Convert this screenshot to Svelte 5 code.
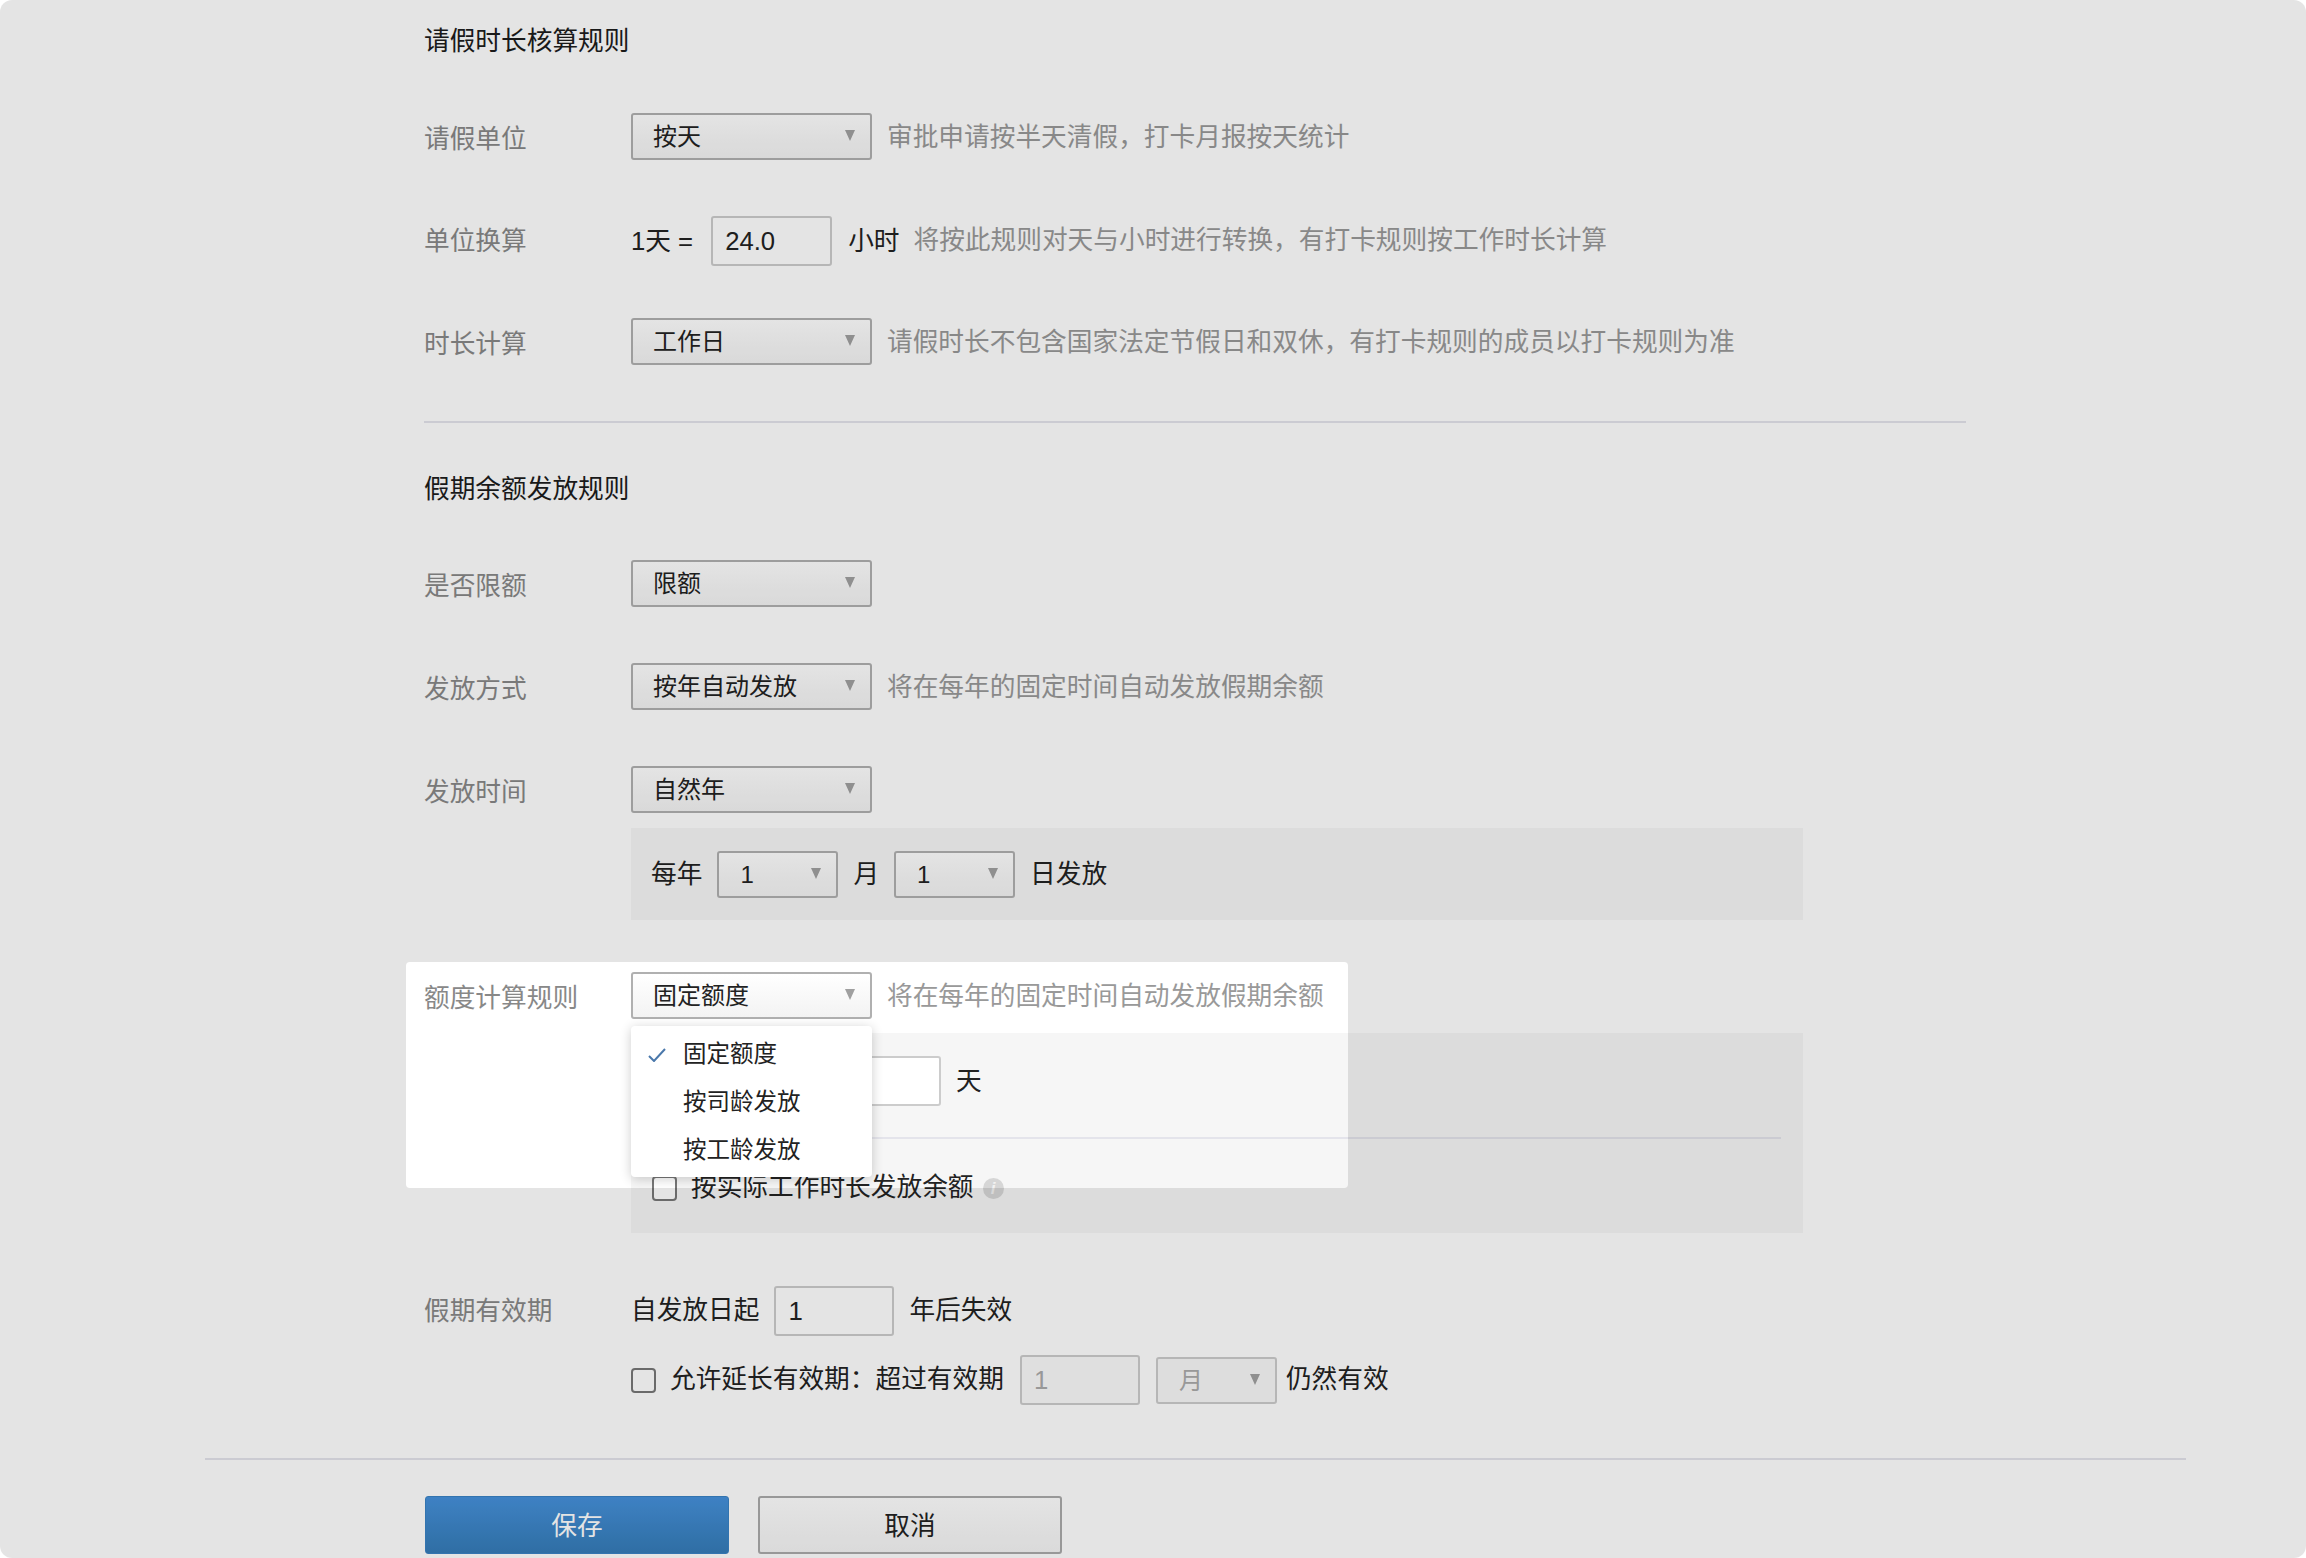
<script>
	let options = ["固定额度", "按司龄发放", "按工龄发放"];
	let selected = "固定额度";
</script>

{#snippet select(text, cls = "")}
	<div class="select {cls}">
		<span>{text}</span>
		<i class="arrow"></i>
	</div>
{/snippet}

<div class="page">
	<div class="form">
		<h3>请假时长核算规则</h3>

		<div class="row r1">
			<div class="label low">请假单位</div>
			{@render select("按天")}
			<div class="hint">审批申请按半天清假，打卡月报按天统计</div>
		</div>
		<div class="row r2">
			<div class="label">单位换算</div>
			<span class="text">1天 =</span>
			<input class="field eq" value="24.0" readonly />
			<span class="text after">小时</span>
			<div class="hint wide">将按此规则对天与小时进行转换，有打卡规则按工作时长计算</div>
		</div>
		<div class="row r3">
			<div class="label low">时长计算</div>
			{@render select("工作日")}
			<div class="hint">请假时长不包含国家法定节假日和双休，有打卡规则的成员以打卡规则为准</div>
		</div>

		<div class="line"></div>

		<h3 class="second">假期余额发放规则</h3>

		<div class="row r4">
			<div class="label low">是否限额</div>
			{@render select("限额")}
		</div>
		<div class="row r5">
			<div class="label low">发放方式</div>
			{@render select("按年自动发放")}
			<div class="hint">将在每年的固定时间自动发放假期余额</div>
		</div>
		<div class="row r5">
			<div class="label low">发放时间</div>
			{@render select("自然年")}
		</div>
		<div class="box date">
			<span class="text">每年</span>
			{@render select("1", "small")}
			<span class="text">月</span>
			{@render select("1", "small")}
			<span class="text">日发放</span>
		</div>

		<div class="row r6">
			<div class="spot"></div>
			<div class="label low">额度计算规则</div>
			<div class="drop">
				{@render select("固定额度")}
				<ul class="menu">
					{#each options as o}
						<li>
							{#if o === selected}
								<svg class="tick" width="18" height="14" viewBox="0 0 18 14"><path d="M1 8 L6 13 L17 1" fill="none" stroke="#4a78ab" stroke-width="2" /></svg>
							{/if}
							{o}
						</li>
					{/each}
				</ul>
			</div>
			<div class="hint">将在每年的固定时间自动发放假期余额</div>
		</div>
		<div class="box quota">
			<div class="quota-top">
				<input class="field" readonly />
				<span class="text">天</span>
			</div>
			<div class="inner-line"></div>
			<div class="check-row">
				<span class="check"></span>
				<span class="text">按实际工作时长发放余额</span>
				<span class="info">i</span>
			</div>
		</div>

		<div class="row r7">
			<div class="label">假期有效期</div>
			<span class="text">自发放日起</span>
			<input class="field" value="1" readonly />
			<span class="text">年后失效</span>
		</div>
		<div class="row r8">
			<span class="check"></span>
			<span class="text">允许延长有效期：超过有效期</span>
			<input class="field off" value="1" disabled />
			{@render select("月", "small off")}
			<span class="text tight">仍然有效</span>
		</div>
	</div>

	<div class="footer">
		<button class="btn primary">保存</button>
		<button class="btn">取消</button>
	</div>
</div>

<style>
	:global(body) {
		background: #fff;
	}
	.page {
		position: relative;
		width: 2306px;
		height: 1558px;
		overflow: hidden;
		border-radius: 12px;
		background: #fff;
		font-family: "Liberation Sans", "Noto Sans CJK SC", sans-serif;
		font-size: 25.7px;
		color: #222;
	}
	.form {
		padding: 24px 340px 0 424px;
	}
	h3 {
		margin: 0;
		font-size: 25.7px;
		font-weight: 400;
		line-height: 34px;
		color: #1c1c1c;
	}
	h3.second {
		margin-top: 49px;
	}
	.row {
		position: relative;
		display: flex;
		align-items: center;
		white-space: nowrap;
	}
	.r1 { margin-top: 55px; }
	.r2 { margin-top: 56px; }
	.r3 { margin-top: 52px; }
	.r4 { margin-top: 54px; }
	.r5 { margin-top: 56px; }
	.r6 { margin-top: 52px; }
	.r7 { margin-top: 53px; gap: 15px; }
	.r8 { margin-top: 19px; margin-left: 207px; }

	.r7 .text,
	.r8 .text {
		padding-bottom: 2px;
	}
	.label {
		width: 207px;
		flex: none;
		color: #888;
		line-height: 34px;
	}
	.r7 .label {
		margin-right: -15px;
	}
	.low {
		padding-top: 4px;
	}
	.text {
		line-height: 34px;
		color: #222;
	}
	.after {
		margin-left: 16px;
	}
	.hint {
		margin-left: 15px;
		color: #999;
		line-height: 34px;
	}
	.hint.wide {
		margin-left: 14px;
		padding-bottom: 2px;
	}
	.select {
		position: relative;
		box-sizing: border-box;
		width: 241px;
		height: 47px;
		flex: none;
		padding-left: 20px;
		line-height: 43px;
		font-size: 24px;
		color: #222;
		border: 2px solid #b0b0b0;
		border-radius: 3px;
		background: linear-gradient(#fff, #f3f3f3);
	}
	.select.small {
		width: 121px;
		padding-left: 21px;
	}
	.select.off {
		margin-left: 16px;
		color: #aaa;
		border-color: #ccc;
		background: #f8f8f8;
	}
	.arrow {
		position: absolute;
		right: 15px;
		top: 15px;
		border-left: 5px solid transparent;
		border-right: 5px solid transparent;
		border-top: 11px solid #a0a0a0;
	}
	.field {
		box-sizing: border-box;
		width: 120px;
		height: 50px;
		flex: none;
		padding: 0 12px;
		font: inherit;
		color: #222;
		background: #fff;
		border: 2px solid #ccc;
		border-radius: 3px;
		outline: none;
	}
	.field.eq {
		width: 121px;
		margin-left: 18px;
	}
	.field.off {
		margin-left: 16px;
		color: #aaa;
		background: #fafafa;
	}
	.line {
		height: 2px;
		margin-top: 56px;
		background: #e4e4eb;
	}
	.box {
		box-sizing: border-box;
		width: 1172px;
		margin-left: 207px;
		background: #f6f6f6;
	}
	.date {
		display: flex;
		align-items: center;
		gap: 15px;
		height: 92px;
		margin-top: 15px;
		padding-left: 20px;
	}
	.quota {
		margin-top: 14px;
		padding: 23px 22px 32px 20px;
	}
	.quota-top {
		display: flex;
		align-items: center;
		gap: 15px;
		padding-left: 170px;
	}
	.inner-line {
		height: 2px;
		margin-top: 31px;
		background: #e4e4eb;
	}
	.check-row {
		display: flex;
		align-items: center;
		height: 26px;
		margin-top: 36px;
		margin-left: 1px;
		white-space: nowrap;
	}
	.check-row .text {
		padding-bottom: 3px;
	}
	.check {
		box-sizing: border-box;
		display: block;
		width: 25px;
		height: 25px;
		flex: none;
		margin-right: 14px;
		background: #fff;
		border: 2px solid #777;
		border-radius: 4px;
	}
	.info {
		width: 21px;
		height: 21px;
		margin-left: 9px;
		border-radius: 50%;
		background: #d6d6d6;
		color: #f2f2f2;
		font-size: 17px;
		font-style: italic;
		font-weight: 700;
		line-height: 21px;
		text-align: center;
	}
	.tight {
		margin-left: 9px;
	}
	.drop {
		position: relative;
		flex: none;
	}
	.menu {
		position: absolute;
		z-index: 2;
		left: 0;
		top: 54px;
		box-sizing: border-box;
		width: 241px;
		height: 151px;
		margin: 0;
		padding: 4px 0;
		list-style: none;
		background: #fff;
		border-radius: 4px;
		box-shadow: 0 2px 12px rgba(0, 0, 0, 0.2);
	}
	.menu li {
		position: relative;
		height: 48px;
		padding-left: 52px;
		font-size: 23.5px;
		line-height: 48px;
		color: #222;
	}
	.tick {
		position: absolute;
		left: 17px;
		top: 18px;
	}
	/* hole in the dim layer, everything outside it gets darkened */
	.spot {
		position: absolute;
		z-index: 1;
		left: -18px;
		top: -10px;
		width: 942px;
		height: 226px;
		border-radius: 4px;
		pointer-events: none;
		box-shadow: 0 0 0 3000px rgba(0, 0, 0, 0.106);
	}
	.footer {
		display: flex;
		gap: 29px;
		margin: 53px 120px 0 205px;
		padding: 36px 0 0 220px;
		border-top: 2px solid #e4e4eb;
	}
	.btn {
		box-sizing: border-box;
		width: 304px;
		height: 58px;
		padding-bottom: 5px;
		font: inherit;
		color: #222;
		border: 2px solid #aaa;
		border-radius: 3px;
		background: linear-gradient(#fff, #f4f4f4);
	}
	.primary {
		color: #fff;
		border: 1px solid #3a82c4;
		background: linear-gradient(#4691db, #357cb8);
	}
</style>
